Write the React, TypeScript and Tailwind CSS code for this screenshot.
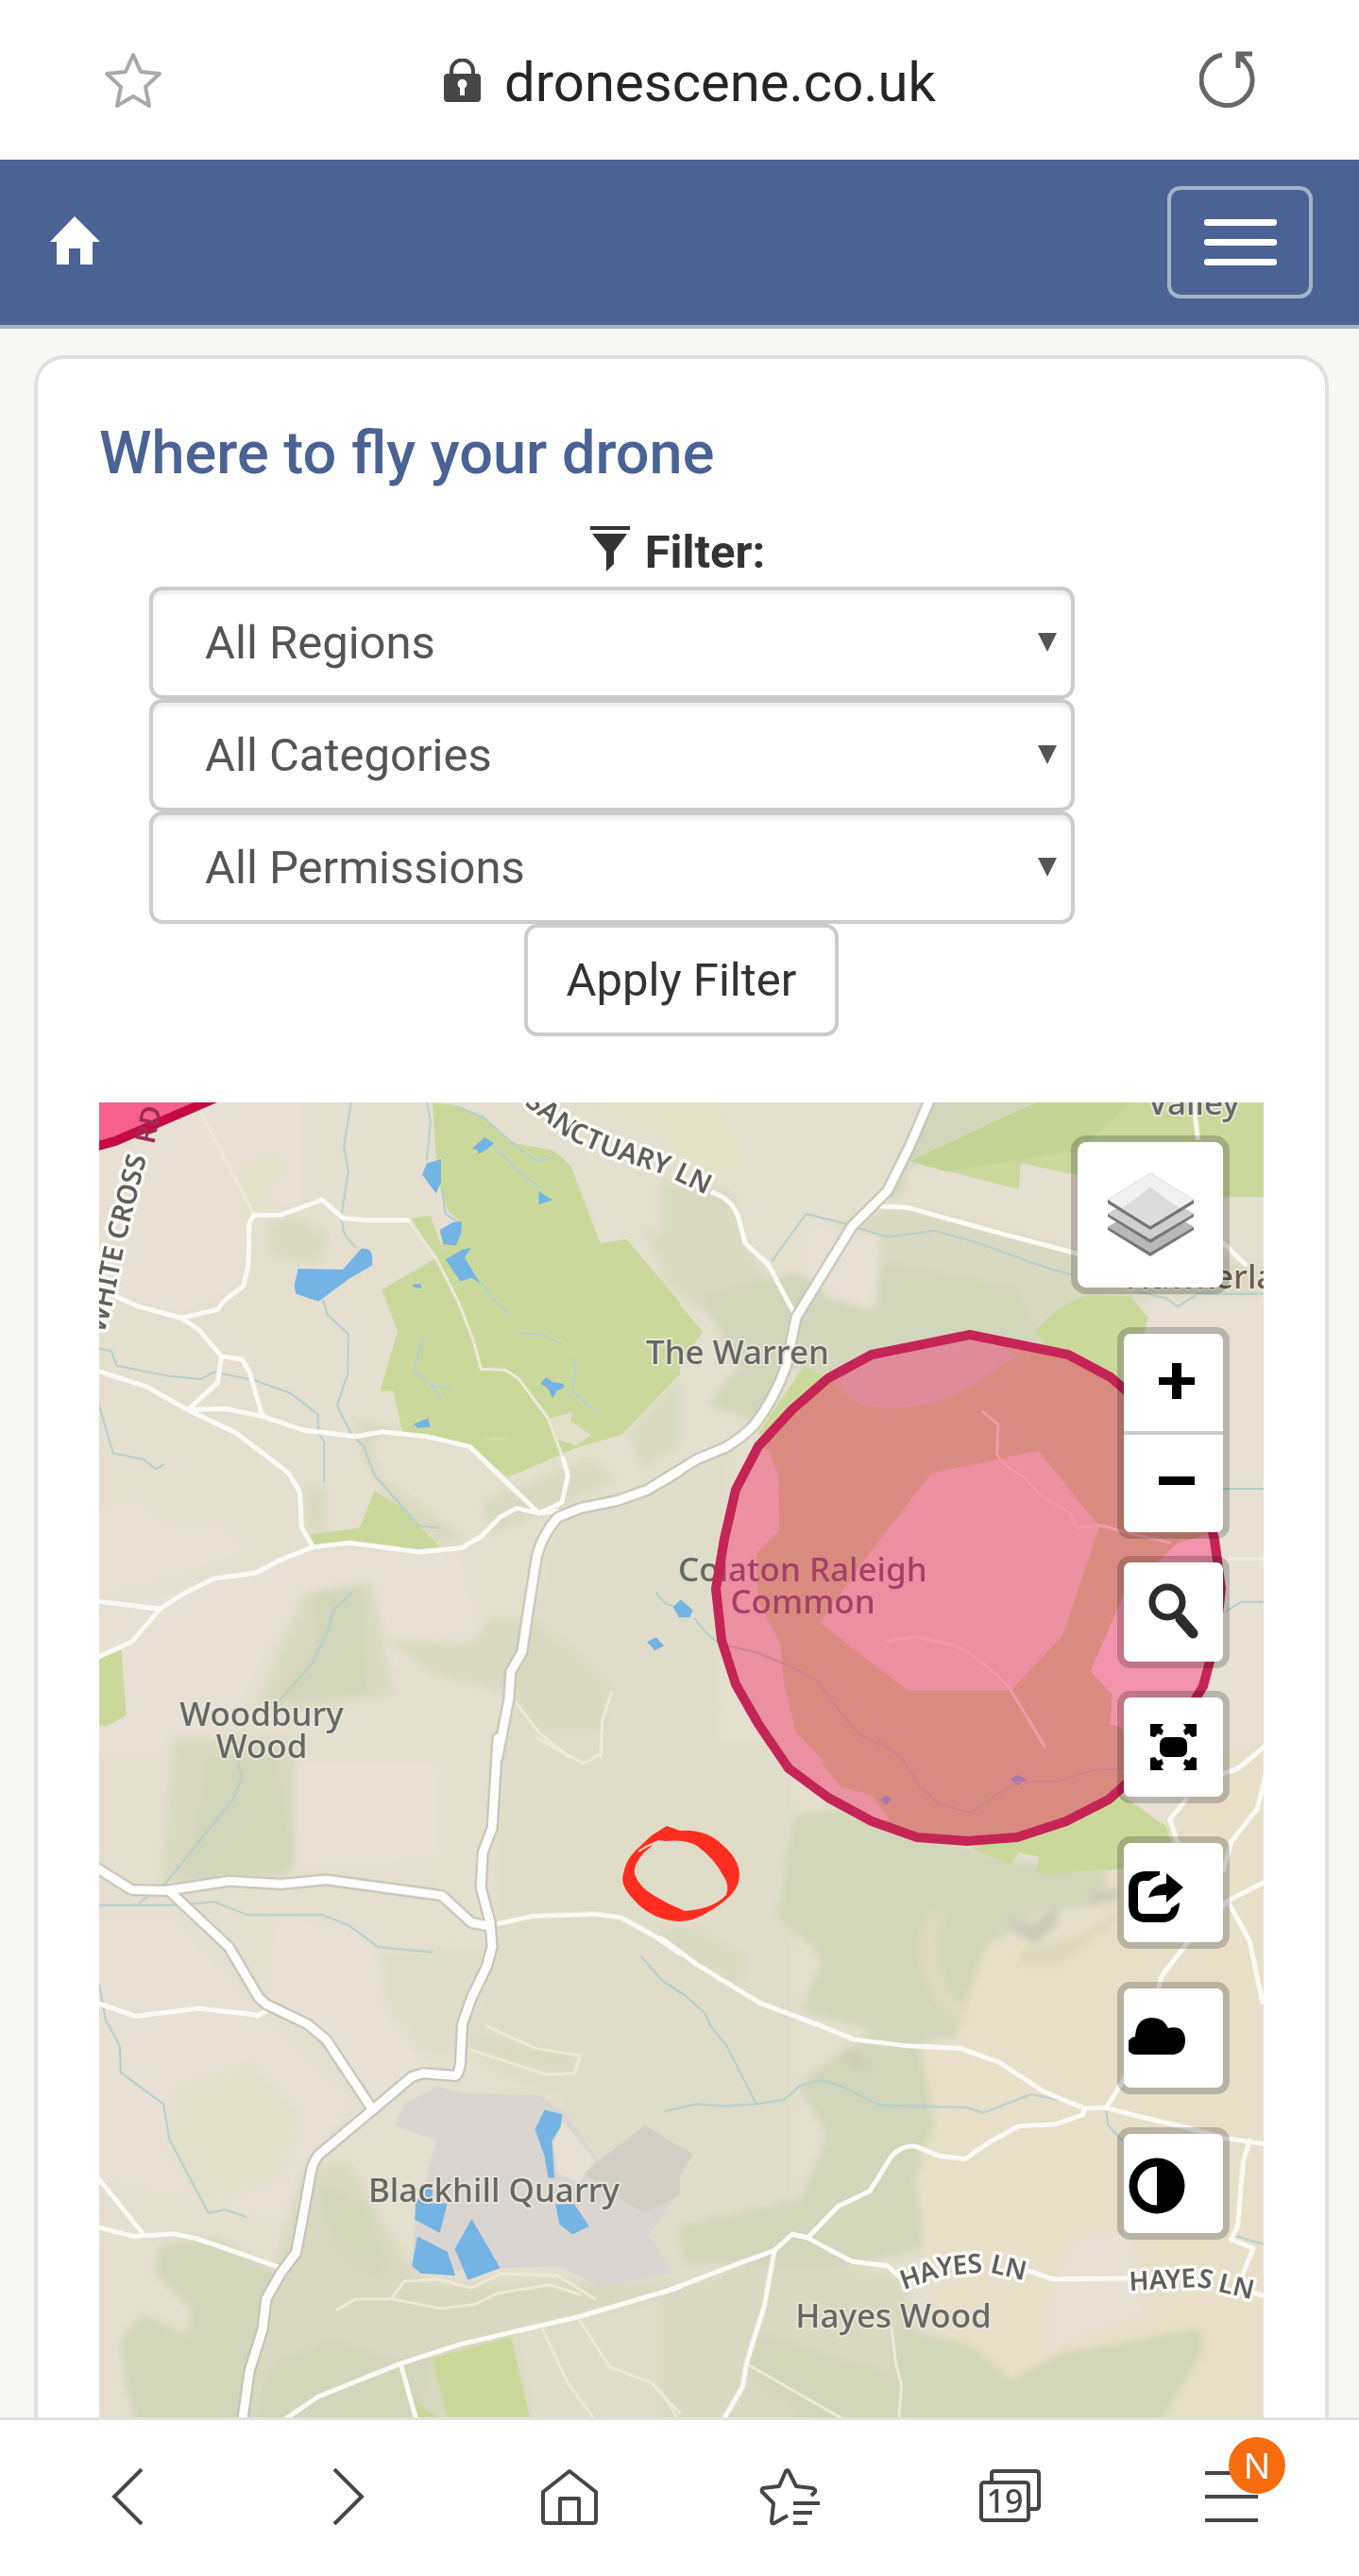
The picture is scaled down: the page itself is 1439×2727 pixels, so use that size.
import React from 'react';

type TileKey = 'nw' | 'ne' | 'sw' | 'se';

interface Shape {
  tile: TileKey;
  d: string;
  color?: string;
}

// Every tile has its own grid, these place them on the map
const TILES: Record<TileKey, string> = {
  nw: 'translate(100 1160) scale(.3954 .4464)',
  ne: 'translate(700 1160) scale(.4209 .4464)',
  sw: 'translate(100 1840) scale(.3954 .4656)',
  se: 'translate(700 1840) scale(.4209 .4656)',
};

const PINKISH = '#e8e0d4';
const PLAIN = '#dfddc9';
const WOOD = '#d9d9c1';
const DENSE = '#d2d6ba';
const SAND = '#e8dfc9';

const LAND: Shape[] = [
  { tile: 'nw', color: PINKISH, d: 'M0,0 H560 V260 L420,280 L400,450 L230,520 L0,460Z' },
  { tile: 'nw', color: PINKISH, d: 'M580,1080 H980 L1040,1290 L980,1380 L800,1350 L760,1160 L560,1200 L480,1290 L400,1440 L300,1568 H0 V1220 L300,1150Z' },
  { tile: 'nw', color: PINKISH, d: 'M0,980 L120,950 L200,1020 L330,1010 L420,1080 L200,1150 L0,1190Z' },
  { tile: 'nw', color: PLAIN, d: 'M1230,1000 L1568,900 V1600 H1060 L1150,1300Z' },
  { tile: 'nw', color: WOOD, d: 'M470,300 L530,285 L630,330 L600,400 L470,380Z' },
  { tile: 'nw', color: '#e5e1c8', d: 'M390,170 L490,135 L510,170 L460,220 L480,270 L400,310Z' },
  { tile: 'nw', color: WOOD, d: 'M560,1180 L740,1150 L800,1420 L500,1460 L440,1440Z' },
  { tile: 'nw', color: DENSE, d: 'M590,1180 L710,1170 L730,1420 L490,1430 L600,1300Z' },
  { tile: 'nw', color: WOOD, d: 'M700,770 L830,790 L740,820 L760,900 L1000,1050 L920,1070 L780,950 L720,860Z' },
  { tile: 'nw', color: WOOD, d: 'M1040,960 L1330,860 L1400,910 L1200,990 L1060,1040Z' },
  { tile: 'nw', color: WOOD, d: 'M780,1290 L1000,1300 L1060,1240 L1180,1240 L1380,1400 L1350,1568 H1230 L1120,1420 L900,1370Z' },
  { tile: 'nw', color: WOOD, d: 'M1430,800 L1568,660 V830 L1470,890Z' },
  { tile: 'nw', color: WOOD, d: 'M1460,310 L1568,350 V480Z' },
  { tile: 'nw', color: WOOD, d: 'M560,925 L620,930 V1035 L570,1035Z' },
  { tile: 'nw', color: '#e4e1c8', d: 'M1250,0 H1568 V100Z' },
  { tile: 'ne', color: '#e4e1c8', d: 'M0,0 H130 L220,150 L140,200 L0,150Z' },
  { tile: 'ne', color: PINKISH, d: 'M1225,470 H1560 V1600 H1180Z' },
  { tile: 'ne', color: WOOD, d: 'M0,200 L180,230 L210,350 L330,520 L150,540 L0,440Z' },
  { tile: 'ne', color: WOOD, d: 'M440,300 L620,260 L1050,370 L1513,400 V470 L1225,480 L960,560 L700,600 L330,560Z' },
  { tile: 'ne', color: DENSE, d: 'M680,0 H1000 L620,170 L600,240 L560,240Z' },
  { tile: 'ne', color: DENSE, d: 'M100,480 L330,420 L540,500 L560,400 L900,460 L940,560 L1000,620 L780,570 L530,610 L420,670 L330,640 L250,780 L120,730 L200,640Z' },
  { tile: 'ne', color: PINKISH, d: 'M480,320 L550,330 L540,510 L420,480 L350,400 L370,300Z' },
  { tile: 'ne', color: PLAIN, d: 'M0,920 L180,830 L140,1600 H0Z' },
  { tile: 'sw', color: PINKISH, d: 'M0,400 H200 L450,620 L700,830 L560,960 L500,1100 L0,1000Z' },
  { tile: 'sw', color: PINKISH, d: 'M540,50 H930 V280 L540,300Z' },
  { tile: 'sw', color: '#e3dfcb', d: 'M210,800 L420,740 L560,860 L500,1000 L300,1070 L200,940Z' },
  { tile: 'sw', color: PINKISH, d: 'M480,400 L740,440 L800,640 L900,750 L760,830 L620,690 L460,600Z' },
  { tile: 'sw', color: PLAIN, d: 'M1090,-20 H1600 V880 L1320,990 L1240,820 L1100,780 L990,700 L1060,500Z' },
  { tile: 'sw', color: PLAIN, d: 'M760,480 L1060,470 L980,720 L880,720 L780,600Z' },
  { tile: 'sw', color: WOOD, d: 'M210,0 H540 V290 L180,330Z' },
  { tile: 'sw', color: DENSE, d: 'M300,50 L480,30 L530,250 L520,310 L230,325 L280,200Z' },
  { tile: 'sw', color: WOOD, d: 'M560,980 L680,960 L830,1180 L900,1240 L1568,1230 V1600 H400 L470,1240Z' },
  { tile: 'sw', color: DENSE, d: 'M600,1020 L720,1060 L780,1200 L750,1230 L640,1140Z' },
  { tile: 'sw', color: DENSE, d: 'M180,1150 L330,1140 L480,1210 L450,1330 L400,1600 H120 L80,1450 L70,1370 L130,1310 L250,1360 L260,1300 L160,1210Z' },
  { tile: 'sw', color: DENSE, d: 'M470,1430 L640,1370 L800,1420 L900,1400 L850,1600 H420Z' },
  { tile: 'sw', color: PLAIN, d: 'M1120,1350 L1568,1260 V1600 H1180Z' },
  { tile: 'sw', color: WOOD, d: 'M1010,680 L1290,725 L1270,760 L1010,710Z' },
  { tile: 'se', color: PLAIN, d: 'M-40,0 H340 V1200 L-40,1240Z' },
  { tile: 'se', color: WOOD, d: 'M0,1260 L280,1180 L600,1220 L660,1370 L600,1600 H0Z' },
  { tile: 'se', color: WOOD, d: 'M0,430 L80,430 L210,500 L200,560 L100,520 L0,460Z' },
  { tile: 'se', color: DENSE, d: 'M350,170 L470,160 L880,280 L1160,300 V380 L960,390 L820,470 L760,620 L740,680 L640,690 L350,620 L400,520 L390,480 L295,410 L330,200Z' },
  { tile: 'se', color: DENSE, d: 'M380,760 L560,650 L660,690 L690,900 L640,1000 L660,1160 L480,1200 L60,1190 L50,1110 L350,1050 L420,900 L350,800Z' },
  { tile: 'se', color: SAND, d: 'M760,620 L820,470 L960,460 L1100,390 L1150,180 L1300,60 L1560,0 V1600 H1250 L1350,1340 L1000,1400 L900,1460 L830,1440 L800,1390 L700,1370 L660,1150 L650,950 L690,880 L650,700 L740,690Z' },
  { tile: 'se', color: PINKISH, d: 'M1040,1140 L1180,1120 L1220,1310 L970,1390 L985,1240Z' },
  { tile: 'se', color: PINKISH, d: 'M1150,50 L1400,20 L1320,140 L1270,200 L1150,160Z' },
  { tile: 'se', color: DENSE, d: 'M590,1340 L780,1380 L880,1460 L1000,1400 L1350,1340 L1370,1380 L1230,1600 H420 L220,1430 L250,1360 L580,1450Z' },
  { tile: 'se', color: '#dcd7bd', d: 'M895,485 L1060,450 L1150,390 L1140,420 L1000,515 L910,515Z' },
  { tile: 'se', color: '#c9c9b8', d: 'M870,410 L930,425 L1000,380 L995,425 L940,468 L890,440Z' },
  { tile: 'se', color: '#cac8bb', d: 'M1080,350 L1150,340 V370 L1090,375Z' },
  { tile: 'se', color: '#c9c9b8', d: 'M440,715 L480,715 L530,755 L500,750Z' },
];

const PARKS: Shape[] = [
  { tile: 'nw', d: 'M905,16 L960,22 L1040,50 L1110,110 L1230,130 L1275,165 L1355,350 L1425,340 L1568,490 V660 L1410,805 L1290,835 L1200,870 L1105,905 L1005,830 L905,815 L825,795 L800,700 L765,700 L812,560 L770,460 L915,385 L848,290 L900,285 L935,370 L925,320 L980,300 L945,270 L920,200Z' },
  { tile: 'nw', d: 'M578,1040 L710,1025 L750,937 L820,975 L925,1070 L830,1078 L690,1060 L590,1070Z' },
  { tile: 'nw', d: 'M0,1335 L72,1312 L85,1470 L30,1497 L0,1490Z' },
  { tile: 'ne', d: 'M40,487 L105,560 L40,645Z' },
  { tile: 'ne', d: 'M625,155 L980,0 H1560 V240 L1400,240 L1030,185 L905,160 L900,222Z' },
  { tile: 'ne', color: '#c1d493', d: 'M625,155 L980,0 H1200 L1050,130 L720,180Z' },
  { tile: 'ne', d: 'M940,560 Q1000,490 1080,472 L1180,475 L1225,525 L1160,750 L1020,650Z' },
  { tile: 'ne', d: 'M245,800 L360,640 L420,670 L270,830Z' },
  { tile: 'se', d: 'M780,250 L1160,130 L1270,200 L1300,290 L945,310 L950,270 L900,260 L880,288Z' },
  { tile: 'sw', d: 'M903,1410 L1115,1362 L1170,1560 H950Z' },
  { tile: 'sw', d: 'M860,1510 L950,1560 H870Z' },
  { tile: 'nw', color: '#e4dfc8', d: 'M1220,765 L1280,750 L1275,770 L1330,805 L1290,830 L1240,815Z' },
  { tile: 'nw', color: '#dcd9b4', d: 'M1045,814 L1075,809 L1105,814 L1075,818Z' },
  { tile: 'sw', color: '#dad5d0', d: 'M830,830 L920,793 L1000,808 L1190,812 L1260,850 L1350,960 L1475,880 L1568,930 V1030 L1485,1130 L1550,1215 L1360,1248 L1240,1200 L1090,1205 L850,1215 L860,1090 L915,915 L805,880Z' },
  { tile: 'sw', color: PINKISH, d: 'M1255,870 L1340,960 L1300,1010 L1240,990 L1230,920Z' },
  { tile: 'sw', color: '#d3cfc5', d: 'M1310,990 L1475,880 L1568,930 V1040 L1470,1080Z' },
  { tile: 'se', color: '#d3cfc5', d: 'M40,925 L80,945 L0,1070 L40,1000Z' },
];

const WATER: Shape[] = [
  { tile: 'nw', d: 'M535,450 L545,410 L665,412 L715,362 Q745,360 744,385 V402 L680,435 L600,488 L540,470Z' },
  { tile: 'nw', d: 'M878,187 L890,160 L928,150 V205 L915,232Z' },
  { tile: 'nw', d: 'M925,318 L960,300 L984,298 L982,325 L968,355 L935,352Z' },
  { tile: 'nw', d: 'M940,388 L985,365 L1008,360 L992,385 L1033,445 L1010,432 L980,440Z' },
  { tile: 'nw', d: 'M1012,125 L1045,98 L1070,112 L1050,128 L1030,138 L1025,128Z' },
  { tile: 'nw', d: 'M1190,225 L1205,235 L1228,247 L1210,252 L1190,258Z' },
  { tile: 'nw', d: 'M1195,682 L1210,668 L1230,680 L1255,682 L1258,692 L1238,700 L1227,718 L1215,695Z' },
  { tile: 'nw', d: 'M855,778 L893,765 L900,785 L865,788Z' },
  { tile: 'nw', d: 'M850,448 L872,446 L877,456 L860,456Z' },
  { tile: 'nw', d: 'M1480,1295 L1505,1285 L1525,1305 L1500,1315Z' },
  { tile: 'ne', d: 'M30,1212 L50,1195 L80,1220 L72,1237 L45,1237Z' },
  { tile: 'sw', d: 'M1180,890 L1205,845 L1253,855 L1248,885 L1225,915 L1232,1000 L1215,1000 L1205,950Z' },
  { tile: 'sw', d: 'M1235,1060 H1285 L1325,1110 L1280,1128 L1245,1105Z' },
  { tile: 'sw', d: 'M880,1030 L905,1018 V1058 H945 L925,1125 L858,1095 L860,1058Z' },
  { tile: 'sw', d: 'M865,1133 L945,1168 L967,1222 L875,1217 L850,1200Z' },
  { tile: 'sw', d: 'M965,1162 L1010,1093 L1087,1205 L1000,1232Z' },
];

const STREAMS: Shape[] = [
  { tile: 'nw', d: 'M687,16 L668,120 L680,180 L660,290 L670,330 L700,360' },
  { tile: 'nw', d: 'M612,485 L625,520 L680,565 L678,660 L650,735 L690,805 L720,830 L750,900 L870,1020 L920,1025' },
  { tile: 'nw', d: 'M13,600 L45,605 L60,640 L200,665 L285,672 L320,655 L430,675 L525,705 L598,755 L600,800 L615,820 V915' },
  { tile: 'nw', d: 'M13,735 L50,848 L130,862 L165,885 L185,875' },
  { tile: 'nw', d: 'M890,16 L900,60 L890,150 M930,220 L940,280 L975,300' },
  { tile: 'nw', d: 'M970,25 L1040,50 L1110,105 L1185,155 L1230,147' },
  { tile: 'nw', d: 'M1060,110 L1130,175 L1190,215 M1035,440 L1070,485 L1115,518 M1142,563 L1200,567 L1250,587' },
  { tile: 'nw', d: 'M880,578 L855,650 L900,685 L955,695 M900,685 L930,720 M1278,622 L1290,640 L1280,700 L1345,752' },
  { tile: 'nw', d: 'M690,1178 L640,1220 L625,1270 L580,1350 L495,1435' },
  { tile: 'nw', d: 'M1505,1180 L1530,1205 L1550,1210' },
  { tile: 'ne', d: 'M280,390 L365,280 L440,298 L570,335 L690,320 L800,350 L960,405 L1035,425' },
  { tile: 'ne', d: 'M1200,465 L1270,480 L1300,500 L1350,470 H1530 M1415,932 H1530 M1425,1220 L1460,1200 H1530' },
  { tile: 'ne', d: 'M85,1240 L120,1280 L150,1300' },
  { tile: 'sw', d: 'M385,60 L395,90 L370,140 L190,330 L120,375' },
  { tile: 'sw', d: 'M0,380 H210 L320,372 L410,402 H610 L680,425 L760,475 L905,487' },
  { tile: 'sw', d: 'M13,560 L30,640 L68,700 L70,760 L185,832 L200,910 L305,1080 L350,1072 L405,1088' },
  { tile: 'sw', d: 'M1465,498 L1520,550 L1568,580' },
  { tile: 'se', d: 'M20,560 L60,585 L110,625 L125,655 L165,700 L240,832' },
  { tile: 'se', d: 'M10,848 L90,832 L160,837 L240,832 L310,822 L350,790 L400,777 L450,790 L550,835 L680,838 L770,840 L810,852 L930,810 L1020,825 L1065,842' },
  { tile: 'se', d: 'M1120,850 L1125,880 L1160,915 M1440,1130 L1530,1155' },
];

const LANES: Shape[] = [
  { tile: 'nw', d: 'M0,455 L120,500 L232,527 L280,555 L340,618 L395,625 L415,655 L450,760 L560,793 L700,808 L770,797 L890,808 L1005,832 L1190,990' },
  { tile: 'nw', d: 'M232,527 L330,507 L345,488 L400,450 L412,400 L415,300 L428,283 L500,282 L610,247 L665,290 L730,295 H838' },
  { tile: 'nw', d: 'M1255,860 L1268,900 L1252,965 L1190,990 M340,618 L330,680 L250,745 M250,745 L350,742 L450,760' },
  { tile: 'nw', d: 'M0,650 L140,690 L250,745 L380,800 L520,895 L550,940 L555,1025 L585,1070' },
  { tile: 'nw', d: 'M0,1335 L100,1295 L175,1217 L240,1180 L320,1145 L430,1132 L500,1100 L585,1070 L685,1060 L870,1082 L985,1072 L1035,1045 L1085,1000 L1130,978 L1190,990 L1240,985' },
  { tile: 'nw', d: 'M0,1198 L175,1217' },
  { tile: 'ne', d: 'M555,262 L620,265 L850,325 L1050,375 M130,230 Q180,245 195,290 L212,350 L270,400 L340,525' },
  { tile: 'ne', d: 'M1340,16 L1350,100 M1415,350 L1470,400' },
  { tile: 'sw', d: 'M1055,427 L1170,405 L1340,400 L1410,408 L1500,450 L1568,490' },
  { tile: 'sw', d: 'M0,600 L50,615 L110,632 L280,615 L440,630 L470,615 M0,990 L130,1127' },
  { tile: 'sw', d: 'M0,1110 L105,1133 L210,1127 L270,1137 L350,1160 L490,1202' },
  { tile: 'sw', d: 'M490,1560 L600,1497 L820,1422 L980,1378 L1300,1315 L1568,1248 M820,1422 L865,1560' },
  { tile: 'se', d: 'M1530,10 L1450,70 L1415,80 M1530,50 L1500,160 L1435,235 L1415,300 M1320,140 L1280,185 L1300,240' },
  { tile: 'se', d: 'M1530,322 L1425,370 L1480,460 L1513,600 M1425,370 L1320,470 L1260,540 L1250,575 L1165,775 L1120,840' },
  { tile: 'se', d: 'M0,455 L90,515 L250,603 L390,650 L485,685 L620,700 L750,705 L850,737 L965,805 L1065,842 L1120,840 L1210,862 L1320,885 L1420,910 L1530,924' },
  { tile: 'se', d: 'M1065,842 L1060,857 L990,878 L900,882 L820,922 L765,957 L700,950 L640,928 Q605,925 580,950 L525,1030 L445,1065 L370,1135 L330,1128 L285,1165 L180,1200 L0,1262' },
  { tile: 'se', d: 'M330,1128 L370,1137 L480,1190 L570,1200 L600,1225 M920,1210 L985,1230 L1170,1228' },
  { tile: 'se', d: 'M285,1165 L260,1290 L215,1420 L205,1475 L150,1560' },
  { tile: 'se', d: 'M1480,915 L1465,960 L1450,1110 L1435,1140 L1490,1160 L1465,1215 M1490,1262 L1530,1270' },
];

const TRACKS: Shape[] = [
  { tile: 'nw', d: 'M838,293 L915,385 L975,490 L1015,580 L1035,648 L1100,650 L1135,670 L1215,765 L1255,860' },
  { tile: 'nw', d: 'M280,30 L428,283 M1130,1440 L1190,1510 L1270,1568 M1385,1415 L1360,1480 L1355,1568' },
  { tile: 'ne', d: 'M1413,1098 H1530' },
  { tile: 'sw', d: 'M1050,655 L1180,705 L1300,722 L1285,762 L1210,765 L1005,708' },
  { tile: 'sw', d: 'M650,1300 L700,1275 L795,1275 L930,1297 L1020,1287 L1080,1262 L1220,1243 L1300,1265' },
  { tile: 'sw', d: 'M795,1275 L830,1235 L920,1230 L1010,1250 L1090,1217 L1240,1222 L1340,1275' },
  { tile: 'sw', d: 'M1185,0 L1310,57 L1358,35 V0 M1200,1345 L1270,1470 L1350,1560 M1300,1325 L1380,1430 L1490,1465 L1568,1535' },
  { tile: 'se', d: 'M220,1425 L480,1560 M580,1340 L590,1420 L605,1470 L597,1560 M0,1485 L50,1560' },
];

const ROADS: Shape[] = [
  { tile: 'nw', d: 'M1568,888 L1480,935 L1400,960 L1300,978 L1240,1000 Q1200,1040 1185,1090 L1160,1230 L1145,1320 L1115,1365 L1110,1430 L1080,1568' },
  { tile: 'ne', d: 'M680,0 L625,120 L570,225 L480,310 L340,525 L315,640 Q285,720 235,780 Q205,810 160,835 L90,862 L0,915' },
  { tile: 'sw', d: 'M1080,0 L1065,205 L1040,260 L1035,340 L1060,420 L1065,475 L1050,520 L1010,590 L985,650 L980,740 Q975,768 965,768 L880,762 L850,770 L745,845 L600,948 Q585,965 580,985 L560,1080 L540,1170 L500,1215 L460,1275 L450,1345 L415,1440 L395,1560' },
  { tile: 'sw', d: 'M0,292 L100,345 L190,347 L360,325 L500,332 L620,322 L930,358 L1010,420 L1055,427' },
  { tile: 'sw', d: 'M200,347 L360,475 L440,590 L460,605 L570,650 L620,685 L745,845' },
];

const ZONE_EDGE =
  'M1027,1413 L1131,1434 L1176,1458 L1213,1490 L1248,1531 L1273,1577 L1286,1630 L1293,1682 L1287,1736 L1274,1785 L1248,1828 L1213,1870 L1174,1905 L1129,1928 L1077,1945 L1024,1949 L971,1945 L923,1928 L877,1903 L835,1872 L803,1825 L779,1783 L764,1736 L758,1682 L767,1629 L779,1577 L803,1531 L839,1492 L877,1459 L923,1434Z';

const ZONE_PATCHES: Shape[] = [
  { tile: 'ne', color: '#e08b99', d: 'M420,670 L530,600 L778,560 L900,615 L850,640 Q790,690 700,725 Q560,760 480,720Z' },
  { tile: 'ne', color: '#ea90a1', d: 'M245,832 L270,840 L295,900 L298,1030 L240,1085 L245,1200 L300,1300 L310,1400 L340,1510 L410,1580 H280 L120,1300 V1000Z' },
  { tile: 'ne', color: '#ea90a1', d: 'M680,895 L950,842 L1103,1022 L1010,1280 L880,1410 H620 L400,1250 L520,1090Z' },
  { tile: 'ne', color: '#f093ab', d: 'M1165,1180 L1300,1060 L1420,1030 V1400 L1340,1568 H1180 L1160,1500 L1130,1490 L1135,1420 L1080,1365Z' },
  { tile: 'se', color: '#ea90a1', d: 'M225,0 H335 L400,50 L450,110 L530,130 L575,185 L520,200 L300,70Z' },
  { tile: 'se', color: '#a878b4', d: 'M878,92 L898,84 L920,94 L898,108Z M552,140 L566,130 L580,140 L566,152Z' },
];

const Shapes: React.FC<{ items: Shape[]; color: string }> = ({ items, color }) => (
  <>
    {items.map((item, i) => (
      <path key={i} d={item.d} transform={TILES[item.tile]} fill={item.color ?? color} />
    ))}
  </>
);

const Lines: React.FC<{ items: Shape[]; color: string; width: number }> = ({ items, color, width }) => (
  <>
    {items.map((item, i) => (
      <path
        key={i}
        d={item.d}
        transform={TILES[item.tile]}
        fill="none"
        stroke={color}
        strokeWidth={width}
        strokeLinejoin="round"
        strokeLinecap="round"
        vectorEffect="non-scaling-stroke"
      />
    ))}
  </>
);

const MapCanvas: React.FC = () => (
  <svg viewBox="105 1167 1233 1392" className="block w-full h-auto" role="img" aria-label="Map">
    <defs>
      <filter id="soften">
        <feGaussianBlur stdDeviation="4" />
      </filter>
      <clipPath id="zone">
        <path d={ZONE_EDGE} />
      </clipPath>
      <path id="white-cross" d="M110,1412 L118,1385 L133,1312 L154,1230 L170,1150" />
      <path id="sanctuary" d="M555,1169 L602,1206 L642,1223 L702,1243 L780,1280" />
      <path id="hayes-west" d="M957,2424 L1000,2409 L1045,2405 L1110,2420" />
      <path id="hayes-east" d="M1196,2425 L1270,2421 L1350,2440" />
    </defs>

    <rect x="105" y="1167" width="1233" height="1392" fill="#e5dfcf" />
    <g filter="url(#soften)">
      <Shapes items={LAND} color={WOOD} />
      <path d="M995,2024 Q976,2055 986,2082 Q993,2118 1022,2135" fill="none" stroke="#dfd9c0" strokeWidth="20" />
    </g>
    <Shapes items={PARKS} color="#cad99b" />
    <Lines items={STREAMS} color="#b3cfd0" width={2} />
    <Shapes items={WATER} color="#74b4e4" />
    <Lines items={TRACKS} color="#efe8d9" width={3} />
    <Lines items={LANES} color="#fbfaf6" width={5} />
    <Lines items={ROADS} color="#c4c1b6" width={13} />
    <Lines items={ROADS} color="#fdfdfb" width={9} />

    {/* restricted zones */}
    <path d="M90,1217 L122,1208 L234,1160 H90Z" fill="#f75f8d" stroke="#c40b45" strokeWidth="10" />
    <g clipPath="url(#zone)">
      <path d={ZONE_EDGE} fill="#da8b7f" />
      <Shapes items={ZONE_PATCHES} color="#ea90a1" />
      <Lines
        items={[
          { tile: 'ne', d: 'M810,750 L848,780 L845,850 Q860,880 915,905 L950,945 L1030,990 L1045,1025 L1103,1018 L1170,1035 L1280,1060' },
          { tile: 'ne', d: 'M570,1293 L640,1283 L740,1303 Q830,1350 880,1410 L965,1543' },
        ]}
        color="#ef9aa6"
        width={3}
      />
      <Lines
        items={[
          { tile: 'ne', d: 'M150,1300 L240,1320 L330,1355 L390,1385 L440,1450 L500,1515 L550,1540' },
          { tile: 'se', d: 'M540,0 L610,50 L650,110 L700,150 L780,170 L850,125 L900,100 L990,100 L1090,72 L1165,70' },
        ]}
        color="#c98392"
        width={2}
      />
    </g>

    <g
      fontFamily="'Noto Sans', sans-serif"
      fontWeight="500"
      fontSize="35"
      fill="#666866"
      stroke="#e9e5d8"
      strokeWidth="4"
      strokeLinejoin="round"
      paintOrder="stroke"
    >
      <text x="684" y="1444">The Warren</text>
      <text x="277" y="1827" textAnchor="middle">Woodbury</text>
      <text x="277" y="1861" textAnchor="middle">Wood</text>
      <text x="523" y="2331" textAnchor="middle">Blackhill Quarry</text>
      <text x="946" y="2464" textAnchor="middle">Hayes Wood</text>
      <text x="1264" y="1180" textAnchor="middle">Valley</text>
      <text x="1192" y="1364" fill="#6b5c52">Hawkerland</text>
      <text x="718" y="1674" stroke="none">
        Co<tspan fill="#a34068">laton Raleigh</tspan>
      </text>
      <text x="850" y="1708" textAnchor="middle" fill="#a34068" stroke="none">Common</text>
    </g>
    <g
      fontFamily="'Noto Sans', sans-serif"
      fontWeight="600"
      fontSize="29"
      fill="#5f605e"
      stroke="#fbfaf6"
      strokeWidth="7"
      strokeLinejoin="round"
      paintOrder="stroke"
    >
      <text><textPath href="#white-cross">WHITE CROSS</textPath></text>
      <text stroke="none" fill="#9c2c55" transform="translate(163 1212) rotate(-78)">RD</text>
      <text><textPath href="#sanctuary">SANCTUARY LN</textPath></text>
      <text fontSize="28"><textPath href="#hayes-west">HAYES LN</textPath></text>
      <text fontSize="28"><textPath href="#hayes-east">HAYES LN</textPath></text>
    </g>

    <path d={ZONE_EDGE} fill="none" stroke="#c52456" strokeWidth="10" strokeLinejoin="round" />

    <path
      fillRule="evenodd"
      fill="#ff2d1f"
      d="M673,1959 L690,1943 L706,1933 L720,1938 Q748,1936 765,1953 Q787,1972 782,1992 Q778,2008 750,2024 Q735,2034 718,2034 Q690,2032 672,2012 Q656,1996 660,1984 Q662,1970 673,1959Z M681,1962 Q670,1975 672,1984 Q677,1998 693,2007 Q708,2016 725,2023 Q755,2021 769,2006 Q773,1996 766,1986 Q757,1968 738,1954 Q725,1947 705,1949 L697,1948Z"
    />
    <path d="M676,1960 L686,1954 L698,1949" fill="none" stroke="#f0ddc9" strokeWidth="2" />
  </svg>
);

const LayersIcon = () => (
  <svg viewBox="0 0 91 89" className="w-[91px] h-[89px]">
    <path d="M0,57 L45,31 L91,57 V60 L45,88 L0,60Z" fill="#777" />
    <path d="M0,57 L45,31 L91,57 L45,84Z" fill="#b8b8b8" />
    <path d="M0,43 L45,17 L91,43 V46 L45,74 L0,46Z" fill="#777" />
    <path d="M0,43 L45,17 L91,43 L45,70Z" fill="#cfcfcf" />
    <path d="M0,28 L45,0 L91,28 V32 L45,60 L0,32Z" fill="#777" />
    <path d="M0,28 L45,0 L91,28 L45,56Z" fill="#f1f1f1" />
    <path d="M15,37 L45,15 L76,37 L45,56Z" fill="#dcdcdc" />
  </svg>
);

const controlClass =
  'w-[119px] h-[119px] flex items-center bg-white bg-clip-padding border-[7px] border-black/20 rounded-[14px]';

const MapControls: React.FC = () => (
  <div className="absolute top-[35px] right-9 flex flex-col items-end gap-[35px] text-black">
    <button
      aria-label="Layers"
      className="w-[168px] h-[168px] flex items-center justify-center bg-white bg-clip-padding border-[7px] border-black/20 rounded-[16px]"
    >
      <LayersIcon />
    </button>

    <div className="flex flex-col items-end">
      <div className="w-[119px] bg-white bg-clip-padding border-[7px] border-black/20 rounded-[14px]">
        <button aria-label="Zoom in" className="w-full h-[107px] flex items-center justify-center pl-1.5 pb-1 border-b-4 border-[#ccc]">
          <svg viewBox="0 0 38 38" className="w-[38px] h-[38px]">
            <path d="M14,0 H24 V15 H38 V23 H24 V38 H14 V23 H0 V15 H14Z" />
          </svg>
        </button>
        <button aria-label="Zoom out" className="w-full h-[103px] flex items-center justify-center pl-1.5 pb-1">
          <svg viewBox="0 0 38 38" className="w-[38px] h-[38px]">
            <path d="M0,13 H38 V22 H0Z" />
          </svg>
        </button>
      </div>
      <button aria-label="Search" className={`${controlClass} justify-center mt-[18px]`}>
        <svg viewBox="0 0 53 61" className="w-[53px] h-[61px]" fill="none" stroke="#2c2c2c">
          <circle cx="20" cy="20" r="16" strokeWidth="7" />
          <path d="M30,33 L34,37" strokeWidth="8" />
          <path d="M34,38 L47,53" strokeWidth="11" strokeLinecap="round" />
        </svg>
      </button>
      <button aria-label="Fullscreen" className={`${controlClass} justify-center mt-6`}>
        <svg viewBox="0 0 49 49" className="w-[49px] h-[49px]">
          <rect x="10" y="14" width="29" height="21" rx="7" />
          <path d="M0,0 H14 L11,4 L14,7 L12,12 L8,10 L5,14 L0,13Z" />
          <path d="M49,0 H35 L38,4 L35,7 L37,12 L41,10 L44,14 L49,13Z" />
          <path d="M0,49 H14 L11,45 L14,42 L12,37 L8,39 L5,35 L0,36Z" />
          <path d="M49,49 H35 L38,45 L35,42 L37,37 L41,39 L44,35 L49,36Z" />
        </svg>
      </button>
    </div>

    <button aria-label="Share" className={`${controlClass} pl-[5px] pt-2`}>
      <svg viewBox="0 0 58 54" className="w-[58px] h-[54px]">
        <path d="M33,0 H19 Q0,0 0,19 V35 Q0,54 19,54 H35 Q53,54 54,33 L45,39 Q44,45 38,45 H16 Q10,45 10,39 V16 Q10,10 16,10 H22 Q26,6 33,4Z" />
        <path d="M40,2 L58,17 L40,33 V25 Q28,25 21,28 Q25,14 40,13Z" />
      </svg>
    </button>
    <button aria-label="Weather" className={`${controlClass} pl-[5px] pb-1`}>
      <svg viewBox="0 0 60 39" className="w-[60px] h-[39px]">
        <path d="M9,39 A9,9 0 0 1 7,20 Q8,0 25,0 Q37,0 42,11 Q60,7 60,25 Q59,38 47,39Z" />
      </svg>
    </button>
    <button aria-label="Contrast" className={`${controlClass} pl-[5px] pt-1`}>
      <svg viewBox="0 0 60 60" className="w-[60px] h-[60px]">
        <circle cx="30" cy="30" r="25" fill="none" stroke="black" strokeWidth="9" />
        <path d="M30,5 A25,25 0 0 1 30,55Z" />
      </svg>
    </button>
  </div>
);

const FilterSelect: React.FC<{ label: string; option: string }> = ({ label, option }) => (
  <div className="relative ml-[53px] mr-[200px]">
    <select
      aria-label={label}
      className="block w-full h-[119px] appearance-none bg-white border-4 border-[#ccc] rounded-[14px] pl-[55px] text-[49px] text-[#555] shadow-[inset_0_4px_4px_rgba(0,0,0,0.075)]"
    >
      <option>{option}</option>
    </select>
    <svg viewBox="0 0 20 20" className="absolute right-[19px] top-[49px] w-5 h-5 pointer-events-none" fill="#555">
      <path d="M0,0 H20 L10,20Z" />
    </svg>
  </div>
);

const BrowserBar: React.FC = () => (
  <header className="h-[169px] bg-white flex items-center pl-[111px] pr-[108px]">
    <button aria-label="Bookmark">
      <svg viewBox="0 0 60 60" className="w-[60px] h-[60px]" fill="none" stroke="#a9a9a9" strokeWidth="4" strokeLinejoin="round">
        <path d="M30,3 L38,21 L58,23 L43,37 L47,57 L30,47 L13,57 L17,37 L2,23 L22,21Z" />
      </svg>
    </button>
    <div className="flex-1 flex items-center justify-center pl-5 pt-1">
      <svg viewBox="0 0 39 46" className="w-[39px] h-[46px] mr-[25px] mb-1" fill="#464646">
        <path d="M8,18 V13 A11,11 0 0 1 31,13 V18" fill="none" stroke="#464646" strokeWidth="4" />
        <rect y="16" width="39" height="30" rx="4" />
        <path d="M17,39 V31 A5,5 0 1 1 22,31 V39Z" fill="white" />
      </svg>
      <span className="text-[58px] leading-[70px] text-[#252525]">dronescene.co.uk</span>
    </div>
    <button aria-label="Reload">
      <svg viewBox="0 0 61 61" className="w-[61px] h-[61px]" fill="none" stroke="#666" strokeWidth="5">
        <path d="M24,4 A27,27 0 1 0 44,8" />
        <path d="M56,3 H41 V18" />
        <path d="M41,3 L48,10" />
      </svg>
    </button>
  </header>
);

const SiteNav: React.FC = () => (
  <nav className="h-[179px] bg-[#4a6294] border-b-4 border-[#a3b4c4] flex items-center justify-between pl-[53px] pr-[49px]">
    <a href="#" aria-label="Home" className="pb-1">
      <svg viewBox="0 0 53 52" className="w-[53px] h-[52px]" fill="white">
        <path d="M26,0 L53,27 H45 V51 H32 V34 H20 V51 H7 V27 H0Z" />
      </svg>
    </a>
    <button
      aria-label="Toggle navigation"
      className="w-[154px] h-[119px] border-4 border-[#a3b4c8] rounded-[14px] flex flex-col items-center justify-center gap-[14px]"
    >
      <span className="w-[77px] h-[7px] rounded-[3px] bg-white" />
      <span className="w-[77px] h-[7px] rounded-[3px] bg-white" />
      <span className="w-[77px] h-[7px] rounded-[3px] bg-white" />
    </button>
  </nav>
);

const Toolbar: React.FC = () => (
  <footer className="sticky bottom-0 z-10 h-[168px] bg-white border-t-[3px] border-[#e2e2e2] grid grid-cols-6 px-[18px] pb-1 text-[#464646]">
    <button aria-label="Back" className="flex items-center justify-center">
      <svg viewBox="0 0 34 60" className="w-[34px] h-[60px]" fill="none" stroke="currentColor" strokeWidth="4">
        <path d="M32,1 L3,30 L32,59" />
      </svg>
    </button>
    <button aria-label="Forward" className="flex items-center justify-center">
      <svg viewBox="0 0 34 60" className="w-[34px] h-[60px]" fill="none" stroke="currentColor" strokeWidth="4">
        <path d="M2,1 L31,30 L2,59" />
      </svg>
    </button>
    <button aria-label="Home page" className="flex items-center justify-center">
      <svg viewBox="0 0 60 60" className="w-[60px] h-[60px]" fill="none" stroke="currentColor" strokeWidth="4" strokeLinejoin="round">
        <path d="M2,25 L30,3 L58,25 V55 Q58,58 55,58 H5 Q2,58 2,55Z" />
        <path d="M20,58 V32 H40 V58" />
      </svg>
    </button>
    <button aria-label="Bookmarks" className="flex items-center justify-center">
      <svg viewBox="0 0 65 62" className="w-[65px] h-[62px]" fill="none" stroke="currentColor" strokeWidth="4" strokeLinejoin="round">
        <path d="M55,30 L59,26 Q60,23 56,22 L39,20 L31,4 Q30,2 28,4 L21,20 L4,22 Q2,23 3,26 L15,38 L13,57 Q13,60 16,59 L30,51" />
        <path d="M36,38 H64 M36,48 H56 M36,59 H51" />
      </svg>
    </button>
    <button aria-label="Tabs" className="flex items-center justify-center">
      <svg viewBox="0 0 66 57" className="w-[66px] h-[57px]" fill="none" stroke="currentColor" strokeWidth="4">
        <path d="M13,14 V5 Q13,2 16,2 H60 Q63,2 63,5 V39 Q63,42 60,42 H53" />
        <rect x="2" y="14" width="50" height="40" rx="3" />
        <text x="27" y="46" textAnchor="middle" fontFamily="'Noto Sans', sans-serif" fontSize="34" fontWeight="500" fill="currentColor" stroke="none">
          19
        </text>
      </svg>
    </button>
    <button aria-label="Menu" className="flex items-center justify-center">
      <span className="relative">
        <svg viewBox="0 0 56 54" className="w-[56px] h-[54px]" stroke="currentColor" strokeWidth="4">
          <path d="M0,2 H56 M0,27 H56 M0,52 H56" />
        </svg>
        <span className="absolute -top-9 left-[25px] w-[60px] h-[60px] rounded-full bg-[#f66c0f] flex items-center justify-center text-white text-[38px] font-['Noto_Sans',sans-serif]">
          N
        </span>
      </span>
    </button>
  </footer>
);

export default function App() {
  return (
    <div className="min-h-screen bg-[#f7f8f3] font-[Roboto,sans-serif]">
      <BrowserBar />
      <SiteNav />
      <main className="mt-7 ml-9 mr-8 bg-white border-4 border-b-0 border-[#e1e1e1] rounded-t-[32px] px-[65px] pt-16">
        <h1 className="text-[63px] leading-[72px] font-medium text-[#4a6294]">Where to fly your drone</h1>
        <form className="mt-[33px]">
          <div className="flex items-center justify-center gap-4 pr-2 text-[#333]">
            <svg viewBox="0 0 42 48" className="w-[42px] h-[48px] mb-2" fill="currentColor">
              <path d="M0,0 H42 V4 H0Z M2,8 H39 L25,27 V40 L17,48 V27Z" />
            </svg>
            <span className="text-[49px] leading-[72px] font-bold">Filter:</span>
          </div>
          <FilterSelect label="Region" option="All Regions" />
          <FilterSelect label="Category" option="All Categories" />
          <FilterSelect label="Permission" option="All Permissions" />
          <button
            type="button"
            className="block mx-auto w-[333px] h-[119px] bg-white border-4 border-[#ccc] rounded-[14px] text-[49px] text-[#333]"
          >
            Apply Filter
          </button>
        </form>
        <div className="relative mt-[70px]">
          <MapCanvas />
          <MapControls />
        </div>
      </main>
      <Toolbar />
    </div>
  );
}
